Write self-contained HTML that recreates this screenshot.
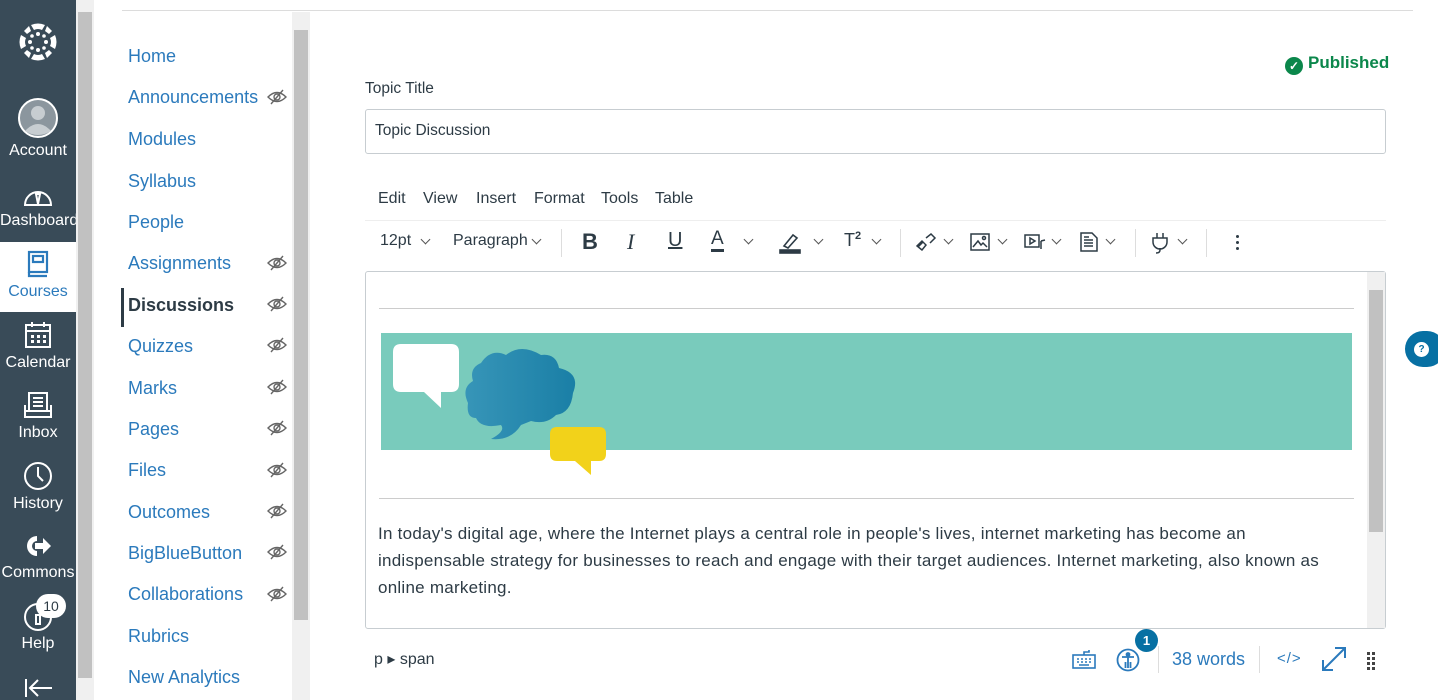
<!DOCTYPE html>
<html><head><meta charset="utf-8"><style>
*{box-sizing:border-box;margin:0;padding:0}
body{width:1438px;height:700px;overflow:hidden;background:#fff;font-family:"Liberation Sans",sans-serif;position:relative;color:#2d3b45}
.a{position:absolute}
#nav{left:0;top:0;width:76px;height:700px;background:#394b58}
.ni{position:absolute;left:0;width:76px;text-align:center;color:#fff;font-size:15px}
.ni svg{display:block;margin:0 auto}
.cn{position:absolute;left:128px;font-size:18px;color:#2b7abc;line-height:22px}
.eye{position:absolute;left:267px;width:20px;height:16px}
.tb{position:absolute;top:232px;font-size:15px;color:#2d3b45}
.cr{position:absolute;top:236px;width:7px;height:7px;border-right:1.3px solid #555;border-bottom:1.3px solid #555;transform:rotate(45deg)}
.mi{position:absolute;top:190px;font-size:16px}
</style></head><body>
<div id="nav" class="a">
 <svg class="a" style="left:17px;top:21px" width="42" height="42" viewBox="0 0 42 42" fill="#fff">
  <path d="M14 4 Q21 1 28 4 L25 9 Q21 7 17 9Z"/><path d="M14 38 Q21 41 28 38 L25 33 Q21 35 17 33Z"/>
  <path d="M4 14 Q1 21 4 28 L9 25 Q7 21 9 17Z"/><path d="M38 14 Q41 21 38 28 L33 25 Q35 21 33 17Z"/>
  <path d="M7 10 L12 5 L14 10 L10 13Z"/><path d="M35 10 L30 5 L28 10 L32 13Z"/><path d="M7 32 L12 37 L14 32 L10 29Z"/><path d="M35 32 L30 37 L28 32 L32 29Z"/>
  <circle cx="21" cy="13" r="2"/><circle cx="21" cy="29" r="2"/><circle cx="13" cy="21" r="2"/><circle cx="29" cy="21" r="2"/>
  <circle cx="15" cy="15" r="1.8"/><circle cx="27" cy="15" r="1.8"/><circle cx="15" cy="27" r="1.8"/><circle cx="27" cy="27" r="1.8"/>
 </svg>
 <div class="ni" style="top:97px"><svg width="42" height="42" viewBox="0 0 42 42"><circle cx="21" cy="21" r="19" fill="#8b969e" stroke="#fff" stroke-width="2"/><circle cx="21" cy="16" r="7" fill="#c7cdd1"/><path d="M8 34 Q21 20 34 34 Q21 42 8 34Z" fill="#c7cdd1"/></svg><div style="margin-top:3px;font-size:16px">Account</div></div>
 <div class="ni" style="top:182px"><svg width="32" height="26" viewBox="0 0 32 26" fill="none" stroke="#fff" stroke-width="2"><path d="M3 23 A13 13 0 1 1 29 23Z"/><path d="M16 22 L14 12 L18 12Z"/></svg><div style="margin-top:4px;font-size:16px">Dashboard</div></div>
 <div class="a" style="left:0;top:242px;width:76px;height:70px;background:#fff"></div>
 <div class="ni" style="top:250px;color:#2b7abc"><svg width="24" height="28" viewBox="0 0 24 28" fill="none" stroke="#2b7abc" stroke-width="2.2"><rect x="3" y="2" width="18" height="20"/><rect x="7" y="6" width="10" height="6"/><path d="M3 22 L3 26 L21 26"/></svg><div style="margin-top:5px;font-size:16px">Courses</div></div>
 <div class="ni" style="top:321px"><svg width="28" height="28" viewBox="0 0 28 28" fill="none" stroke="#fff" stroke-width="2"><rect x="2" y="4" width="24" height="22"/><path d="M2 10 H26 M8 1 V6 M20 1 V6"/><path d="M7 14h3v3H7zM13 14h3v3h-3zM19 14h3v3h-3zM7 19h3v3H7zM13 19h3v3h-3zM19 19h3v3h-3z" fill="#fff" stroke="none"/></svg><div style="margin-top:5px;font-size:16px">Calendar</div></div>
 <div class="ni" style="top:391px"><svg width="30" height="28" viewBox="0 0 30 28" fill="none" stroke="#fff" stroke-width="2"><rect x="6" y="2" width="18" height="18"/><path d="M10 7H20M10 11H20M10 15H20M2 14 V26 H28 V14 M2 20 H28"/></svg><div style="margin-top:5px;font-size:16px">Inbox</div></div>
 <div class="ni" style="top:461px"><svg width="30" height="30" viewBox="0 0 30 30" fill="none" stroke="#fff" stroke-width="2"><circle cx="15" cy="15" r="13"/><path d="M15 6 V15 L20 20"/></svg><div style="margin-top:4px;font-size:16px">History</div></div>
 <div class="ni" style="top:533px"><svg width="30" height="26" viewBox="0 0 30 26" fill="#fff"><path d="M14 3 A10 10 0 1 0 14 23 L14 18 A5 5 0 1 1 14 8Z"/><path d="M12 10 H20 V5 L28 13 L20 21 V16 H12Z"/></svg><div style="margin-top:5px;font-size:16px">Commons</div></div>
 <div class="ni" style="top:602px"><svg width="30" height="30" viewBox="0 0 30 30" fill="none" stroke="#fff" stroke-width="2"><circle cx="15" cy="15" r="13"/><rect x="13" y="13" width="4" height="9"/></svg><div style="margin-top:3px;font-size:16px">Help</div></div>
 <div class="a" style="left:36px;top:594px;width:30px;height:24px;border-radius:12px;background:#fff;color:#2d3b45;font-size:14px;text-align:center;line-height:24px">10</div>
 <svg class="a" style="left:24px;top:678px" width="30" height="20" viewBox="0 0 30 20" fill="none" stroke="#fff" stroke-width="2"><path d="M2 1 V19 M6 10 H28 M14 2 L6 10 L14 18"/></svg>
</div>
<div class="a" style="left:76px;top:0;width:18px;height:700px;background:#f0f0f0"></div>
<div class="a" style="left:78px;top:12px;width:14px;height:666px;background:#c1c1c1"></div>
<div class="a" style="left:122px;top:10px;width:1291px;height:1px;background:#dcdcdc"></div>
<div class="a" style="left:292px;top:12px;width:18px;height:688px;background:#f0f0f0"></div>
<div class="a" style="left:294px;top:30px;width:14px;height:590px;background:#c1c1c1"></div>
<div class="a" style="left:121px;top:288px;width:3px;height:39px;background:#2d3b45"></div>
<div class="cn" style="top:45px">Home</div>
<div class="cn" style="top:86px">Announcements</div>
<div class="cn" style="top:128px">Modules</div>
<div class="cn" style="top:170px">Syllabus</div>
<div class="cn" style="top:211px">People</div>
<div class="cn" style="top:252px">Assignments</div>
<div class="cn" style="top:294px;color:#2d3b45;font-weight:bold">Discussions</div>
<div class="cn" style="top:335px">Quizzes</div>
<div class="cn" style="top:377px">Marks</div>
<div class="cn" style="top:418px">Pages</div>
<div class="cn" style="top:459px">Files</div>
<div class="cn" style="top:501px">Outcomes</div>
<div class="cn" style="top:542px">BigBlueButton</div>
<div class="cn" style="top:583px">Collaborations</div>
<div class="cn" style="top:625px">Rubrics</div>
<div class="cn" style="top:666px">New Analytics</div>
<svg width="0" height="0"><defs><g id="eye" fill="none" stroke="#666" stroke-width="1.4"><path d="M1 8 Q10 -1 19 8 Q10 17 1 8Z"/><circle cx="10" cy="8" r="3"/><path d="M4 15 L16 1"/></g></defs></svg>
<svg class="eye" style="top:89px" viewBox="0 0 20 16"><use href="#eye"/></svg>
<svg class="eye" style="top:255px" viewBox="0 0 20 16"><use href="#eye"/></svg>
<svg class="eye" style="top:296px" viewBox="0 0 20 16"><use href="#eye"/></svg>
<svg class="eye" style="top:337px" viewBox="0 0 20 16"><use href="#eye"/></svg>
<svg class="eye" style="top:379px" viewBox="0 0 20 16"><use href="#eye"/></svg>
<svg class="eye" style="top:420px" viewBox="0 0 20 16"><use href="#eye"/></svg>
<svg class="eye" style="top:462px" viewBox="0 0 20 16"><use href="#eye"/></svg>
<svg class="eye" style="top:503px" viewBox="0 0 20 16"><use href="#eye"/></svg>
<svg class="eye" style="top:544px" viewBox="0 0 20 16"><use href="#eye"/></svg>
<svg class="eye" style="top:586px" viewBox="0 0 20 16"><use href="#eye"/></svg>

<div class="a" style="left:1285px;top:53px;font-size:17px;font-weight:bold;color:#0b874b;white-space:nowrap"><span style="display:inline-block;width:18px;height:18px;border-radius:9px;background:#0b874b;color:#fff;font-size:12px;text-align:center;line-height:18px;vertical-align:-2px;margin-right:5px">✓</span>Published</div>
<div class="a" style="left:365px;top:80px;font-size:15.5px">Topic Title</div>
<div class="a" style="left:365px;top:109px;width:1021px;height:45px;border:1px solid #c7cdd1;border-radius:3px;font-size:15.5px;padding:12px 9px">Topic Discussion</div>
<div class="mi" style="left:378px">Edit</div>
<div class="mi" style="left:423px">View</div>
<div class="mi" style="left:476px">Insert</div>
<div class="mi" style="left:534px">Format</div>
<div class="mi" style="left:601px">Tools</div>
<div class="mi" style="left:655px">Table</div>
<div class="a" style="left:365px;top:220px;width:1021px;height:1px;background:#eee"></div>
<div class="tb" style="left:380px;font-size:16px">12pt</div><div class="cr" style="left:422px"></div>
<div class="tb" style="left:453px;font-size:16px">Paragraph</div><div class="cr" style="left:533px"></div>
<div class="a" style="left:561px;top:229px;width:1px;height:28px;background:#ddd"></div>
<div class="tb" style="left:582px;top:229px;font-size:22px;font-weight:bold">B</div>
<div class="tb" style="left:627px;top:229px;font-size:22px;font-style:italic;font-family:'Liberation Serif',serif">I</div>
<div class="tb" style="left:668px;top:229px;font-size:20px;text-decoration:underline">U</div>
<div class="tb" style="left:711px;top:229px;font-size:19px;border-bottom:3px solid #2d3b45;line-height:20px">A</div><div class="cr" style="left:745px"></div>
<svg class="a" style="left:779px;top:232px" width="22" height="22" viewBox="0 0 22 22" fill="none" stroke="#2d3b45" stroke-width="1.6"><path d="M5 14 L14 3 L18 6 L9 16Z"/><rect x="1" y="18" width="20" height="3" fill="#2d3b45"/></svg><div class="cr" style="left:815px"></div>
<div class="tb" style="left:844px;top:230px;font-size:18px">T<sup style="font-size:11px;font-weight:bold">2</sup></div><div class="cr" style="left:873px"></div>
<div class="a" style="left:900px;top:229px;width:1px;height:28px;background:#ddd"></div>
<svg class="a" style="left:915px;top:232px" width="22" height="20" viewBox="0 0 22 20" fill="none" stroke="#2d3b45" stroke-width="1.5"><path d="M3 15 L8 10 M11 6 L16 2 L20 6 L15 11 M7 18 L2 14 L7 9 L11 13Z"/></svg><div class="cr" style="left:945px"></div>
<svg class="a" style="left:970px;top:233px" width="20" height="18" viewBox="0 0 20 18" fill="none" stroke="#2d3b45" stroke-width="1.5"><rect x="1" y="1" width="18" height="16"/><path d="M3 14 L8 8 L11 12 L13 10 L17 14"/><circle cx="14" cy="5" r="1.5"/></svg><div class="cr" style="left:999px"></div>
<svg class="a" style="left:1024px;top:233px" width="22" height="18" viewBox="0 0 22 18" fill="none" stroke="#2d3b45" stroke-width="1.5"><rect x="1" y="2" width="14" height="12"/><path d="M6 5 L11 8 L6 11Z"/><path d="M17 8 V16 M17 8 L21 7"/></svg><div class="cr" style="left:1053px"></div>
<svg class="a" style="left:1080px;top:232px" width="18" height="20" viewBox="0 0 18 20" fill="none" stroke="#2d3b45" stroke-width="1.5"><path d="M1 1 H12 L17 6 V19 H1Z M4 8 H13 M4 11 H13 M4 14 H13 M4 5 H9"/></svg><div class="cr" style="left:1107px"></div>
<div class="a" style="left:1135px;top:229px;width:1px;height:28px;background:#ddd"></div>
<svg class="a" style="left:1150px;top:232px" width="20" height="22" viewBox="0 0 20 22" fill="none" stroke="#2d3b45" stroke-width="1.5"><path d="M7 1 V6 M13 1 V6 M3 6 H17 V10 A7 7 0 0 1 3 10Z M10 16 V18 Q10 21 6 21"/></svg><div class="cr" style="left:1179px"></div>
<div class="a" style="left:1206px;top:229px;width:1px;height:28px;background:#ddd"></div>
<div class="a" style="left:1236px;top:235px;width:3px;height:3px;background:#2d3b45;border-radius:2px;box-shadow:0 6px 0 #2d3b45,0 12px 0 #2d3b45"></div>

<div class="a" style="left:365px;top:271px;width:1021px;height:358px;border:1px solid #c7cdd1;border-radius:3px"></div>
<div class="a" style="left:1367px;top:272px;width:18px;height:356px;background:#f0f0f0"></div>
<div class="a" style="left:1369px;top:290px;width:14px;height:242px;background:#c1c1c1"></div>
<div class="a" style="left:379px;top:308px;width:975px;height:1px;background:#ccc"></div>
<div class="a" style="left:381px;top:333px;width:971px;height:117px;background:#79cbbc"></div>
<svg class="a" style="left:381px;top:333px" width="240" height="150" viewBox="0 0 240 150">
 <defs><linearGradient id="g" x1="0" x2="1"><stop offset="0" stop-color="#3795b8"/><stop offset="1" stop-color="#1a7fa6"/></linearGradient></defs>
 <path d="M20 11 H70 Q78 11 78 19 V51 Q78 59 70 59 H60 V75 L43 59 H20 Q12 59 12 51 V19 Q12 11 20 11Z" fill="#fff"/>
 <path d="M100 30 Q110 15 125 22 Q140 10 160 22 Q175 20 178 35 Q200 40 192 60 Q190 80 175 82 Q165 92 150 88 L140 92 Q130 108 110 106 Q125 98 120 92 Q100 96 95 85 Q85 85 87 70 Q80 55 92 48 Q88 35 100 30Z" fill="url(#g)"/>
 <path d="M176 94 H218 Q225 94 225 101 V121 Q225 128 218 128 H210 V142 L194 128 H176 Q169 128 169 121 V101 Q169 94 176 94Z" fill="#f2d21a"/>
</svg>
<div class="a" style="left:379px;top:498px;width:975px;height:1px;background:#ccc"></div>
<div class="a" style="left:378px;top:520px;width:985px;font-size:17px;line-height:27px;color:#2d3b45;letter-spacing:0.25px;white-space:nowrap">In today's digital age, where the Internet plays a central role in people's lives, internet marketing has become an<br>indispensable strategy for businesses to reach and engage with their target audiences. Internet marketing, also known as<br>online marketing.</div>

<div class="a" style="left:374px;top:649px;font-size:16px">p ▸ span</div>
<svg class="a" style="left:1072px;top:649px" width="24" height="20" viewBox="0 0 24 20" fill="none" stroke="#2b7abc" stroke-width="1.6"><rect x="1" y="6" width="22" height="13"/><path d="M12 6 V3 H17 V1" /><path d="M5 10h2M9 10h2M13 10h2M17 10h2M5 13h2M9 13h2M13 13h2M17 13h2M7 16h10"/></svg>
<svg class="a" style="left:1116px;top:648px" width="24" height="24" viewBox="0 0 24 24" fill="none" stroke="#2b7abc" stroke-width="1.8"><circle cx="12" cy="12" r="10.5"/><circle cx="12" cy="6.5" r="1.5" fill="#2b7abc"/><path d="M6 9 H18 M12 9 V20 M9.5 14 V20 M14.5 14 V20"/></svg>
<div class="a" style="left:1135px;top:629px;width:23px;height:23px;border-radius:12px;background:#0770a3;color:#fff;font-size:13px;font-weight:bold;text-align:center;line-height:23px">1</div>
<div class="a" style="left:1158px;top:646px;width:1px;height:27px;background:#ddd"></div>
<div class="a" style="left:1172px;top:649px;font-size:18px;color:#2b7abc">38 words</div>
<div class="a" style="left:1259px;top:646px;width:1px;height:27px;background:#ddd"></div>
<div class="a" style="left:1277px;top:650px;font-size:15px;color:#2b7abc;letter-spacing:1px">&lt;/&gt;</div>
<svg class="a" style="left:1321px;top:646px" width="26" height="26" viewBox="0 0 26 26" fill="none" stroke="#2b7abc" stroke-width="2"><path d="M2 24 L24 2 M14 2 H24 V12 M2 14 V24 H12"/></svg>
<div class="a" style="left:1367px;top:652px;width:3px;height:3px;background:#444;box-shadow:5px 0 #444,0 5px #444,5px 5px #444,0 10px #444,5px 10px #444,0 15px #444,5px 15px #444"></div>
<div class="a" style="left:1405px;top:331px;width:40px;height:36px;border-radius:18px;background:#0770a3"></div>
<div class="a" style="left:1414px;top:342px;width:15px;height:15px;border-radius:8px;background:#fff;color:#0770a3;font-size:10px;font-weight:bold;text-align:center;line-height:15px">?</div>
</body></html>
